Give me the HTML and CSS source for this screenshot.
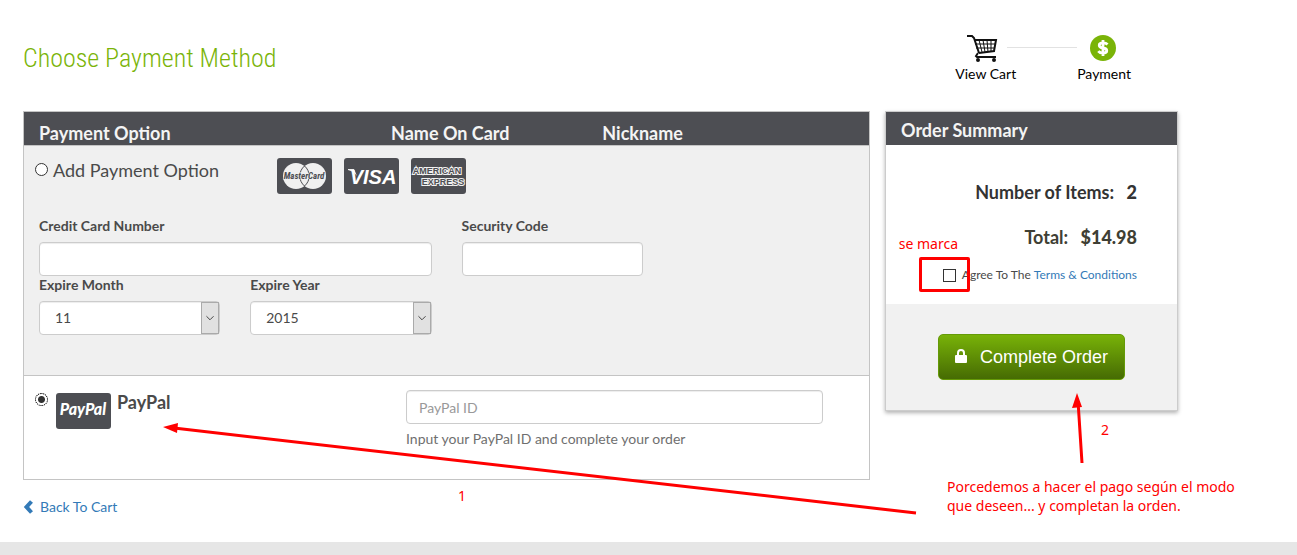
FILE: index.html
```html
<!DOCTYPE html>
<html lang="en">
<head>
    <meta charset="UTF-8">
    <meta name="viewport" content="width=device-width, initial-scale=1.0">
    <title>Choose Payment Method</title>
    <link rel="stylesheet" href="styles.css">
</head>
<body>
    <div class="page">
        <header class="top">
            <h1>Choose Payment Method</h1>
            <ol class="steps">
                <li>
                    <svg width="40" height="28" viewBox="0 0 40 28" fill="none" stroke="#111">
                        <path d="M1 2h5l2 2 5 15" stroke-width="2"/>
                        <path d="M8 6h22l-2 11-15 2" stroke-width="2"/>
                        <path d="M9 10h20M10 14h18M13 6l3 12M17 6l2 12M21 6l1 12M25 6v11"/>
                        <path d="M12 19l-2 3 1 1h19" stroke-width="2"/>
                        <circle cx="12" cy="26" r="1" stroke-width="2"/>
                        <circle cx="28" cy="26" r="1" stroke-width="2"/>
                    </svg>
                    <span>View Cart</span>
                </li>
                <li class="line"></li>
                <li>
                    <svg width="28" height="28" viewBox="0 0 28 28">
                        <circle cx="13" cy="14" r="13" fill="#7ab408"/>
                        <path d="M17.500 10.500C16.500 9.300 15 8.800 13 8.800c-5 0-5 4.600 0 5.200s5 5.200 0 5.200c-2 0-3.700-.7-4.700-2M13 6v16" fill="none" stroke="#fff" stroke-width="2.800"/>
                    </svg>
                    <span>Payment</span>
                </li>
            </ol>
        </header>

        <main class="columns">
            <form class="options" id="payment">
                <div class="options-head">
                    <span>Payment Option</span>
                    <span>Name On Card</span>
                    <span>Nickname</span>
                </div>

                <section class="card-option">
                    <div class="card-choice">
                        <label class="add"><input type="radio" name="method" value="card"> Add Payment Option</label>
                        <div class="logos">
                            <svg width="55" height="36" viewBox="0 0 55 36">
                                <rect width="55" height="36" rx="3" fill="#4d4e53"/>
                                <circle cx="19" cy="18" r="13" fill="#f0f0f0"/>
                                <circle cx="36" cy="18" r="13" fill="#f0f0f0"/>
                                <path d="M27.500 8a13 13 0 0 1 0 20M27.500 8a13 13 0 0 0 0 20" fill="none" stroke="#4d4e53"/>
                                <text x="27" y="21" class="mark mastercard">MasterCard</text>
                            </svg>
                            <svg width="55" height="36" viewBox="0 0 55 36">
                                <rect width="55" height="36" rx="3" fill="#4d4e53"/>
                                <path d="M4 11h6l3 7C11 15 8 13 4 12z" fill="#f0f0f0"/>
                                <text x="29" y="26" class="mark visa">VISA</text>
                            </svg>
                            <svg width="55" height="36" viewBox="0 0 55 36">
                                <rect width="55" height="36" rx="3" fill="#4d4e53"/>
                                <text x="26" y="16" class="mark amex">AMERICAN</text>
                                <text x="32" y="27" class="mark amex">EXPRESS</text>
                            </svg>
                        </div>
                    </div>
                    <div class="fields">
                        <div class="field wide">
                            <label for="number">Credit Card Number</label>
                            <input type="text" id="number">
                        </div>
                        <div class="field">
                            <label for="code">Security Code</label>
                            <input type="text" id="code">
                        </div>
                        <div class="field first">
                            <label for="month">Expire Month</label>
                            <div class="select">
                                <select id="month"><option>11</option><option>12</option></select>
                                <svg width="18" height="32" viewBox="0 0 18 32"><path d="M5 14l4 4 4-4"/></svg>
                            </div>
                        </div>
                        <div class="field">
                            <label for="year">Expire Year</label>
                            <div class="select">
                                <select id="year"><option>2015</option><option>2016</option></select>
                                <svg width="18" height="32" viewBox="0 0 18 32"><path d="M5 14l4 4 4-4"/></svg>
                            </div>
                        </div>
                    </div>
                </section>

                <section class="paypal-option">
                    <label class="paypal">
                        <input type="radio" name="method" value="paypal" checked>
                        <svg width="55" height="36" viewBox="0 0 55 36">
                            <rect width="55" height="36" rx="3" fill="#4d4e53"/>
                            <text x="27" y="22" class="mark pp">PayPal</text>
                        </svg>
                        <span>PayPal</span>
                    </label>
                    <div class="paypal-id">
                        <input type="text" placeholder="PayPal ID" aria-label="PayPal ID">
                        <p>Input your PayPal ID and complete your order</p>
                    </div>
                </section>
            </form>

            <aside class="summary">
                <h2>Order Summary</h2>
                <div class="totals">
                    <p>Number of Items: <b>2</b></p>
                    <p class="total">Total: <b>$14.98</b></p>
                    <div class="agree">
                        <input type="checkbox" id="agree">
                        <label for="agree">Agree To The</label>
                        <a href="#">Terms &amp; Conditions</a>
                        <span class="red-box"></span>
                        <span class="note note-check">se marca</span>
                    </div>
                </div>
                <div class="submit">
                    <button type="submit" form="payment">
                        <svg width="14" height="16" viewBox="0 0 14 16">
                            <rect x="1" y="6" width="12" height="8" rx="1" fill="#fff"/>
                            <path d="M4 7V4a3 3 0 0 1 6 0v3" fill="none" stroke="#fff" stroke-width="2"/>
                        </svg>
                        Complete Order
                    </button>
                </div>
            </aside>
        </main>

        <a class="back" href="#">
            <svg width="10" height="14" viewBox="0 0 10 14"><path d="M8.500 1.500L3.500 7l5 5.500" fill="none" stroke="#337ab7" stroke-width="4"/></svg>
            Back To Cart
        </a>

        <!-- tutorial arrows and notes -->
        <svg class="arrows" width="1177" height="540" viewBox="0 0 1177 540">
            <path d="M916 513L174 428M1082 463l-4-62" fill="none" stroke="red" stroke-width="3"/>
            <path d="M163 427l15-4-1 10zM1077 393l-5 15 10-1z" fill="red"/>
        </svg>
        <span class="note note-one">1</span>
        <span class="note note-two">2</span>
        <p class="note note-pay">Porcedemos a hacer el pago según el modo<br>que deseen... y completan la orden.</p>
    </div>
    <footer></footer>
</body>
</html>
```
FILE: styles.css
```css
:root {
    --dark: #4d4e53;
    --panel: #f0f0f0;
    --border: #c4c4c4;
    --text: #4a4a4a;
    --link: #337ab7;
    --green: #7ab408;
}

* {
    margin: 0;
    padding: 0;
    box-sizing: border-box;
}

body {
    display: flex;
    flex-direction: column;
    min-height: 100vh;
    background: #fff;
    color: var(--text);
    font-family: Lato, "Liberation Sans", sans-serif;
    font-size: 14px;
    line-height: 20px;
}

input, select, button {
    font: inherit;
    color: inherit;
}

a {
    color: var(--link);
    text-decoration: none;
}

svg {
    display: block;
    flex: none;
}

.page {
    position: relative;
    width: 100%;
    max-width: 1178px;
    padding: 34px 0 25px 23px;
}

.top {
    display: flex;
    justify-content: space-between;
    height: 77px;
    padding-right: 47px;
}

h1 {
    padding-top: 8px;
    color: var(--green);
    font-family: "Roboto Condensed", "Liberation Sans Narrow", Roboto, sans-serif;
    font-size: 26px;
    font-weight: 300;
    line-height: 32px;
}

.steps {
    display: flex;
    list-style: none;
    color: #000;
}

.steps li {
    display: flex;
    flex-direction: column;
    align-items: center;
    gap: 2px;
}

.steps .line {
    width: 70px;
    height: 1px;
    margin: 13px 0 0 -9px;
    background: #e2e2e2;
}

.columns {
    display: grid;
    grid-template-columns: minmax(0, 847fr) minmax(0, 293fr);
    align-items: start;
    gap: 15px;
}

.options {
    border: 1px solid var(--border);
}

.options-head {
    display: grid;
    grid-template-columns: 5fr 3fr 4fr;
    padding-top: 10px;
    height: 33px;
    background: var(--dark);
    color: #f4f4f4;
    font-size: 18px;
    font-weight: bold;
    line-height: 22px;
}

.options-head span {
    padding-left: 15px;
}

.card-option {
    height: 231px;
    padding-top: 12px;
    border-top: 1px solid var(--border);
    border-bottom: 1px solid var(--border);
    background: var(--panel);
}

.card-choice {
    display: grid;
    grid-template-columns: 30% 1fr;
    height: 58px;
}

.add {
    display: flex;
    gap: 5px;
    padding-left: 11px;
    font-size: 18px;
    line-height: 24px;
}

input[type="radio"] {
    appearance: none;
    flex: none;
    width: 13px;
    height: 13px;
    margin-top: 5px;
    border: 1px solid #333;
    border-radius: 50%;
    background: #fff;
}

input[type="radio"]:checked {
    border: 1px dotted #000;
    background: radial-gradient(circle, #333 0 3px, #fff 4px);
    outline: 1px dotted #333;
    outline-offset: -1px;
}

.logos {
    display: flex;
    gap: 12px;
    margin-left: -1px;
}

.mark {
    fill: #fff;
    font-family: "Liberation Sans", sans-serif;
    font-weight: bold;
    font-style: italic;
    text-anchor: middle;
}

.mastercard {
    fill: var(--dark);
    stroke: #f0f0f0;
    stroke-width: 1px;
    paint-order: stroke;
    font-family: "Roboto Condensed", "Liberation Sans Narrow", sans-serif;
    font-size: 9px;
}

.visa {
    font-size: 20px;
}

.amex {
    fill: var(--dark);
    stroke: #f0f0f0;
    stroke-width: 2px;
    paint-order: stroke;
    font-size: 9px;
    font-style: normal;
}

.pp {
    font-family: Lato, sans-serif;
    font-size: 16px;
    font-weight: 900;
}

.fields {
    display: grid;
    grid-template-columns: repeat(4, 1fr);
    padding-top: 1px;
}

.field {
    padding: 0 15px;
}

.wide {
    grid-column: span 2;
}

.first {
    grid-column: 1;
}

.field label {
    display: block;
    height: 25px;
    font-weight: bold;
    line-height: 18px;
}

.field input, .select, .paypal-id input {
    display: block;
    width: 100%;
    height: 34px;
    border: 1px solid #ccc;
    border-radius: 4px;
    background: #fff;
    box-shadow: inset 0 1px 1px rgba(0, 0, 0, 0.075);
}

.select {
    display: flex;
}

.select select {
    appearance: none;
    flex: 1;
    min-width: 0;
    padding: 0 15px;
    border: none;
    background: transparent;
}

.select svg {
    border: 1px solid #aaa;
    background: #e1e1e1;
    fill: none;
    stroke: #333;
}

.paypal-option {
    display: grid;
    grid-template-columns: 382fr 463fr;
    height: 103px;
    padding-top: 14px;
}

.paypal {
    display: flex;
    padding-left: 11px;
    font-size: 18px;
    font-weight: bold;
    line-height: 24px;
}

.paypal input {
    margin-top: 3px;
}

.paypal svg {
    margin: 3px 6px 0 8px;
}

.paypal-id {
    padding-right: 46px;
    color: #6f6f6f;
}

.paypal-id input {
    padding: 0 12px;
}

.paypal-id input::placeholder {
    color: #999;
}

.paypal-id p {
    margin-top: 5px;
}

.summary {
    border: 1px solid #ccc;
    box-shadow: 0 2px 4px rgba(0, 0, 0, 0.3);
}

h2 {
    height: 33px;
    padding: 7px 15px;
    background: var(--dark);
    color: #f4f4f4;
    font-size: 18px;
    line-height: 22px;
}

.totals {
    height: 159px;
    padding: 35px 40px 0 0;
    text-align: right;
}

.totals p {
    margin-bottom: 21px;
    color: #333;
    font-size: 18px;
    font-weight: bold;
    line-height: 24px;
}

.totals b {
    margin-left: 8px;
}

.totals .total {
    margin-bottom: 18px;
    color: #3f3f34;
}

.agree {
    position: relative;
    display: flex;
    align-items: center;
    justify-content: flex-end;
    gap: 3px;
    font-size: 12px;
    line-height: 16px;
}

.agree input {
    appearance: none;
    width: 13px;
    height: 13px;
    margin-right: 3px;
    border: 1px solid #333;
    background: #fff;
}

.submit {
    display: flex;
    justify-content: center;
    padding: 30px 0;
    background: #f1f1f1;
}

button {
    display: flex;
    align-items: center;
    gap: 12px;
    height: 46px;
    padding: 0 16px 0 15px;
    border: 1px solid #659a08;
    border-radius: 5px;
    background: linear-gradient(#78b208, #466b03);
    color: #fff;
    font-family: "Liberation Sans", sans-serif;
    font-size: 18px;
    cursor: pointer;
}

.back {
    display: flex;
    align-items: center;
    gap: 7px;
    width: max-content;
    margin-top: 17px;
}

.note {
    position: absolute;
    color: red;
    font-family: "Noto Sans", sans-serif;
    font-size: 14px;
    line-height: 19px;
    white-space: nowrap;
}

.red-box {
    position: absolute;
    top: -10px;
    right: 167px;
    width: 51px;
    height: 35px;
    border: 3px solid red;
    border-radius: 2px;
}

.note-check {
    top: -33px;
    right: 179px;
}

.arrows {
    position: absolute;
    top: 0;
    left: 0;
    pointer-events: none;
}

.note-one {
    top: 486px;
    left: 458px;
}

.note-two {
    top: 420px;
    left: 1101px;
}

.note-pay {
    top: 477px;
    left: 947px;
}

footer {
    flex: 1;
    background: #e6e6e6;
}
```
